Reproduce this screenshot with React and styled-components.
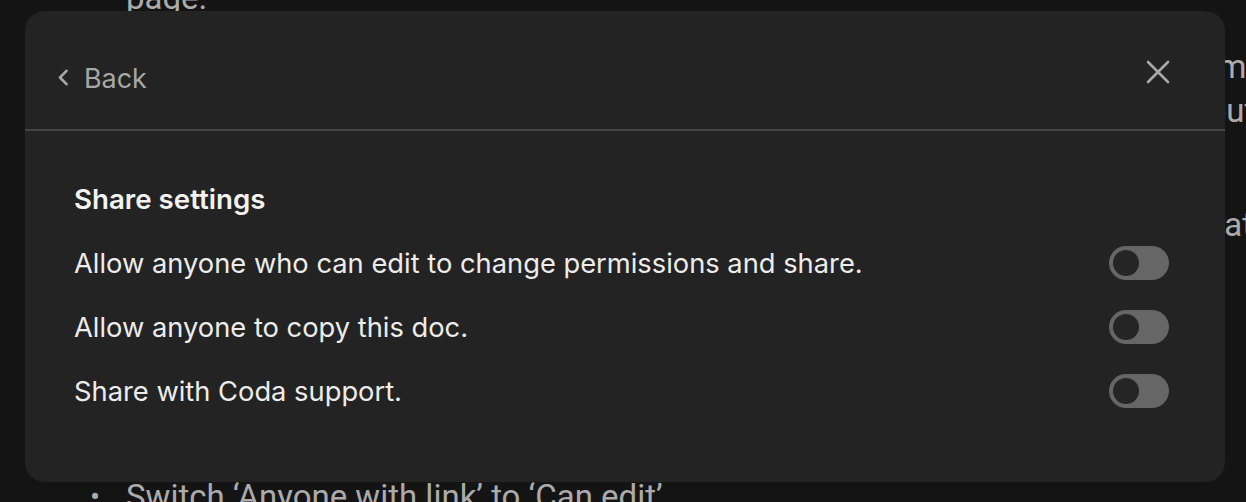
import React from "react";
import styled, { createGlobalStyle } from "styled-components";

const GlobalStyle = createGlobalStyle`
  html, body {
    margin: 0;
    padding: 0;
    background: #141414;
  }
  body {
    width: 1246px;
    height: 502px;
    overflow: hidden;
  }
`;

const Page = styled.div`
  position: relative;
  width: 1246px;
  height: 502px;
  overflow: hidden;
  background: #141414;
`;

const Doc = styled.div`
  padding-left: 126px;
  margin-top: -24px;
  font-family: Roboto, "Liberation Sans", sans-serif;
  font-size: 33px;
  line-height: 44px;
  color: #ababab;
  white-space: nowrap;
`;

const DocPara = styled.div`
  position: relative;
  margin-top: ${({ $gap }) => $gap || 0}px;
`;

const DocLine = styled.div`
  padding-left: ${({ $indent }) => $indent || 0}px;
`;

const Bullet = styled.span`
  position: absolute;
  left: -36px;
  top: 0;
  font-size: 30px;
`;

const Modal = styled.div`
  position: absolute;
  top: 11px;
  left: 25px;
  width: 1200px;
  height: 471px;
  box-sizing: border-box;
  background: #232323;
  border-radius: 20px;
  font-family: Inter, "Noto Sans", sans-serif;
  display: flex;
  flex-direction: column;
`;

const Header = styled.div`
  height: 118px;
  flex-shrink: 0;
  display: flex;
  align-items: center;
  justify-content: space-between;
  padding: 0 55px 0 32px;
  border-bottom: 2px solid #454545;
`;

const BackButton = styled.button`
  display: flex;
  align-items: center;
  gap: 15px;
  padding: 0;
  margin-top: 15px;
  border: none;
  background: none;
  color: #a8a8a8;
  font-family: inherit;
  font-size: 26.9px;
  cursor: pointer;
`;

const CloseButton = styled.button`
  display: flex;
  padding: 0;
  margin-top: 3px;
  border: none;
  background: none;
  color: #a8a8a8;
  cursor: pointer;
`;

const Body = styled.div`
  padding: 36px 56px 0 49px;
  display: flex;
  flex-direction: column;
`;

const Heading = styled.div`
  height: 64px;
  display: flex;
  align-items: center;
  font-size: 27.7px;
  font-weight: 600;
  color: #f2f2f2;
`;

const Row = styled.div`
  height: 64px;
  display: flex;
  align-items: center;
  justify-content: space-between;
  font-size: 27.3px;
  color: #ececec;
`;

const Toggle = styled.button`
  position: relative;
  width: 60px;
  height: 34px;
  padding: 0;
  border: none;
  border-radius: 17px;
  background: ${({ $on }) => ($on ? "#4f7cff" : "#666666")};
  cursor: pointer;
`;

const Knob = styled.span`
  position: absolute;
  top: 4px;
  left: ${({ $on }) => ($on ? "30px" : "4px")};
  width: 26px;
  height: 26px;
  border-radius: 50%;
  background: #252525;
`;

const settings = [
  "Allow anyone who can edit to change permissions and share.",
  "Allow anyone to copy this doc.",
  "Share with Coda support.",
];

function ChevronLeft() {
  return (
    <svg width="12" height="17" viewBox="0 0 12 17" fill="none">
      <polyline
        points="9.5,1.8 3,8.5 9.5,15.2"
        stroke="currentColor"
        strokeWidth="2.6"
        strokeLinecap="round"
        strokeLinejoin="round"
      />
    </svg>
  );
}

function CloseIcon() {
  return (
    <svg width="24" height="24" viewBox="0 0 24 24" fill="none">
      <path
        d="M2 2 L22 22 M22 2 L2 22"
        stroke="currentColor"
        strokeWidth="2.6"
        strokeLinecap="round"
      />
    </svg>
  );
}

export default function App() {
  return (
    <Page>
      <GlobalStyle />
      <Doc>
        <DocPara>page.</DocPara>
        <DocPara $gap={25}>
          <DocLine $indent={26}>Update the Intro and Closing blurbs on the “I Care” Community Updates email.</DocLine>
          <DocLine $indent={6}>This is what people will see when you send out emails. (Leave the header out</DocLine>
          <DocLine $indent={6}>Updates and the editing section alone)</DocLine>
        </DocPara>
        <DocPara $gap={26}>
          <DocLine $indent={60}>Update the Blog post template. This template is used whenever you create a new post</DocLine>
          <DocLine $indent={2}>for your community, so make it your own.</DocLine>
          <DocLine $indent={2}>Add your logo and pick the colors for the site.</DocLine>
          <DocLine $indent={2}>Once you've personalized the site, you're ready to publish it!</DocLine>
        </DocPara>
        <DocPara $gap={31}>Click 'Share' button at the top right.</DocPara>
        <DocPara $gap={21}>
          <Bullet>•</Bullet>
          Switch ‘Anyone with link’ to ‘Can edit’.
        </DocPara>
      </Doc>

      <Modal>
        <Header>
          <BackButton>
            <ChevronLeft />
            Back
          </BackButton>
          <CloseButton aria-label="Close">
            <CloseIcon />
          </CloseButton>
        </Header>
        <Body>
          <Heading>Share settings</Heading>
          {settings.map((label) => (
            <Row key={label}>
              {label}
              <Toggle aria-label={label}>
                <Knob />
              </Toggle>
            </Row>
          ))}
        </Body>
      </Modal>
    </Page>
  );
}
